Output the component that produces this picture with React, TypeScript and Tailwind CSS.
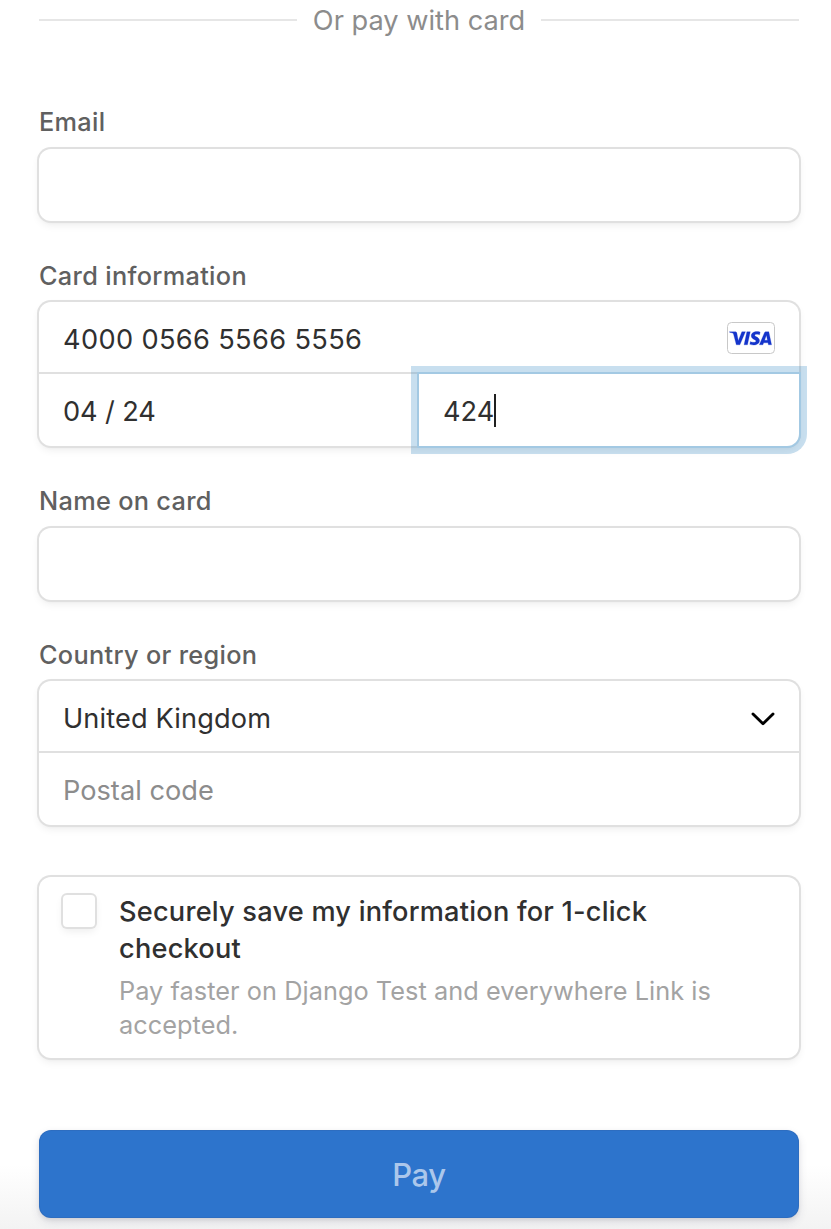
import type { ReactNode } from "react";

const BOX =
  "rounded-[12px] bg-white shadow-[0_0_0_2px_#e0e0e0,0_4px_8px_rgba(0,0,0,0.07),0_2px_3px_rgba(0,0,0,0.04)]";

function Label({ children }: { children: ReactNode }) {
  return (
    <div className="h-[36px] text-[25.3px] leading-[36px] font-medium tracking-[0.32px] text-[#606060]">
      {children}
    </div>
  );
}

function VisaBadge() {
  return (
    <svg width="48" height="32" viewBox="0 0 48 32" aria-label="Visa">
      <rect x="0.5" y="0.5" width="47" height="31" rx="4" fill="#fff" stroke="#c8c8c8" />
      <g transform="translate(2.4 9.5) scale(0.0422 0.0418)" fill="#1434cb" stroke="#1434cb" strokeWidth="6">
        <path d="M651.19.5c-70.93,0-134.32,36.77-134.32,104.69,0,77.9,112.42,83.28,112.42,122.42,0,16.48-18.88,31.23-51.14,31.23-45.77,0-79.98-20.61-79.98-20.61l-14.64,68.55s39.41,17.41,91.73,17.41c77.55,0,138.58-38.57,138.58-107.66,0-82.32-112.89-87.54-112.89-123.86,0-12.91,15.5-27.05,47.66-27.05,36.29,0,65.89,14.99,65.89,14.99l14.33-66.2S696.61.5,651.18.5h0ZM2.22,5.5L.5,15.49s29.84,5.46,56.72,16.36c34.61,12.49,37.07,19.77,42.9,42.35l63.51,244.83h85.14L379.93,5.5h-84.94l-84.28,213.17-34.39-180.7c-3.15-20.68-19.13-32.48-38.68-32.48,0,0-135.41,0-135.41,0Zm411.87,0l-66.63,313.53h81L494.85,5.5h-80.76Zm451.76,0c-19.53,0-29.88,10.46-37.47,28.73l-118.67,284.8h84.94l16.43-47.47h103.48l9.99,47.47h74.95L934.12,5.5h-68.27Zm11.05,84.71l25.18,117.65h-67.45l42.28-117.65h0Z" />
      </g>
    </svg>
  );
}

export default function App() {
  return (
    <div className="h-[1229px] w-[831px] overflow-hidden bg-[linear-gradient(to_bottom,#fff_0,#fff_1165px,#f3f3f3_1229px)] font-[Inter,'Noto_Sans',sans-serif] text-[#303030]">
      <div className="flex h-full flex-col pr-[32px] pl-[39px]">
        <div className="flex h-[40px] items-center gap-[16px]">
          <div className="h-[2px] flex-1 bg-[#e6e6e6]" />
          <span className="pt-[2px] text-[27.2px] leading-[38px] text-[#8c8c8c]">Or pay with card</span>
          <div className="h-[2px] flex-1 bg-[#e6e6e6]" />
        </div>

        <div className="mt-[64px]">
          <Label>Email</Label>
          <div className={`mt-[9px] h-[72px] ${BOX}`} />
        </div>

        <div className="mt-[37px]">
          <Label>Card information</Label>
          <div className={`mt-[8px] h-[144px] text-[27.2px] ${BOX}`}>
            <div className="flex h-[72px] items-center justify-between border-b-2 border-[#e0e0e0] pt-[2px] pr-[24px] pl-[24px]">
              <span className="pt-[4px] tracking-[0.35px]">4000 0566 5566 5556</span>
              <VisaBadge />
            </div>
            <div className="flex h-[72px]">
              <div className="flex w-[380px] items-center pt-[4px] pl-[24px] tracking-[-0.1px]">04 / 24</div>
              <div className="flex w-[380px] items-center rounded-br-[12px] bg-white pl-[24px] shadow-[0_0_0_2px_#a3c9e3,0_0_0_8px_rgba(50,135,195,0.27)]">
                <span className="pt-[4px]">424</span>
                <div className="h-[33px] w-[2px] bg-[#202020]" />
              </div>
            </div>
          </div>
        </div>

        <div className="mt-[37px]">
          <Label>Name on card</Label>
          <div className={`mt-[9px] h-[72px] ${BOX}`} />
        </div>

        <div className="mt-[37px]">
          <Label>Country or region</Label>
          <div className={`mt-[8px] h-[144px] text-[27.2px] ${BOX}`}>
            <div className="flex h-[72px] items-center justify-between border-b-2 border-[#e0e0e0] pt-[4px] pr-[24px] pl-[24px]">
              <span className="pt-[2px] tracking-[0.12px]">United Kingdom</span>
              <svg className="mt-[2px]" width="24" height="14" viewBox="0 0 24 14" fill="none">
                <path
                  d="M2 2 L12 11.7 L22 2"
                  stroke="#000"
                  strokeWidth="2.9"
                  strokeLinecap="round"
                  strokeLinejoin="round"
                />
              </svg>
            </div>
            <div className="flex h-[72px] items-center pt-[4px] pl-[24px] text-[#8c8c8c]">
              <span>Postal code</span>
            </div>
          </div>
        </div>

        <div className={`mt-[52px] flex h-[181px] pt-[18px] pl-[24px] ${BOX}`}>
          <div className="h-[32px] w-[32px] shrink-0 rounded-[4px] bg-white shadow-[0_0_0_2px_#e0e0e0,0_4px_8px_rgba(0,0,0,0.08)]" />
          <div className="-mt-[2px] ml-[24px]">
            <div className="text-[27.2px] leading-[37px] font-medium tracking-[0.21px]">
              Securely save my information for 1-click
              <br />
              checkout
            </div>
            <div className="mt-[7px] text-[25.3px] leading-[34px] tracking-[0.05px] text-[#a3a3a3]">
              Pay faster on Django Test and everywhere Link is
              <br />
              accepted.
            </div>
          </div>
        </div>

        <button className="mt-[72px] flex h-[88px] shrink-0 items-center justify-center rounded-[12px] bg-[#2d74cc] pt-[3px] text-[31px] font-medium tracking-[-0.4px] text-[#abc7eb] shadow-[inset_0_0_0_1px_rgba(50,50,93,0.1),0_4px_10px_rgba(50,50,93,0.12),0_2px_4px_rgba(0,0,0,0.08)]">
          Pay
        </button>
      </div>
    </div>
  );
}
